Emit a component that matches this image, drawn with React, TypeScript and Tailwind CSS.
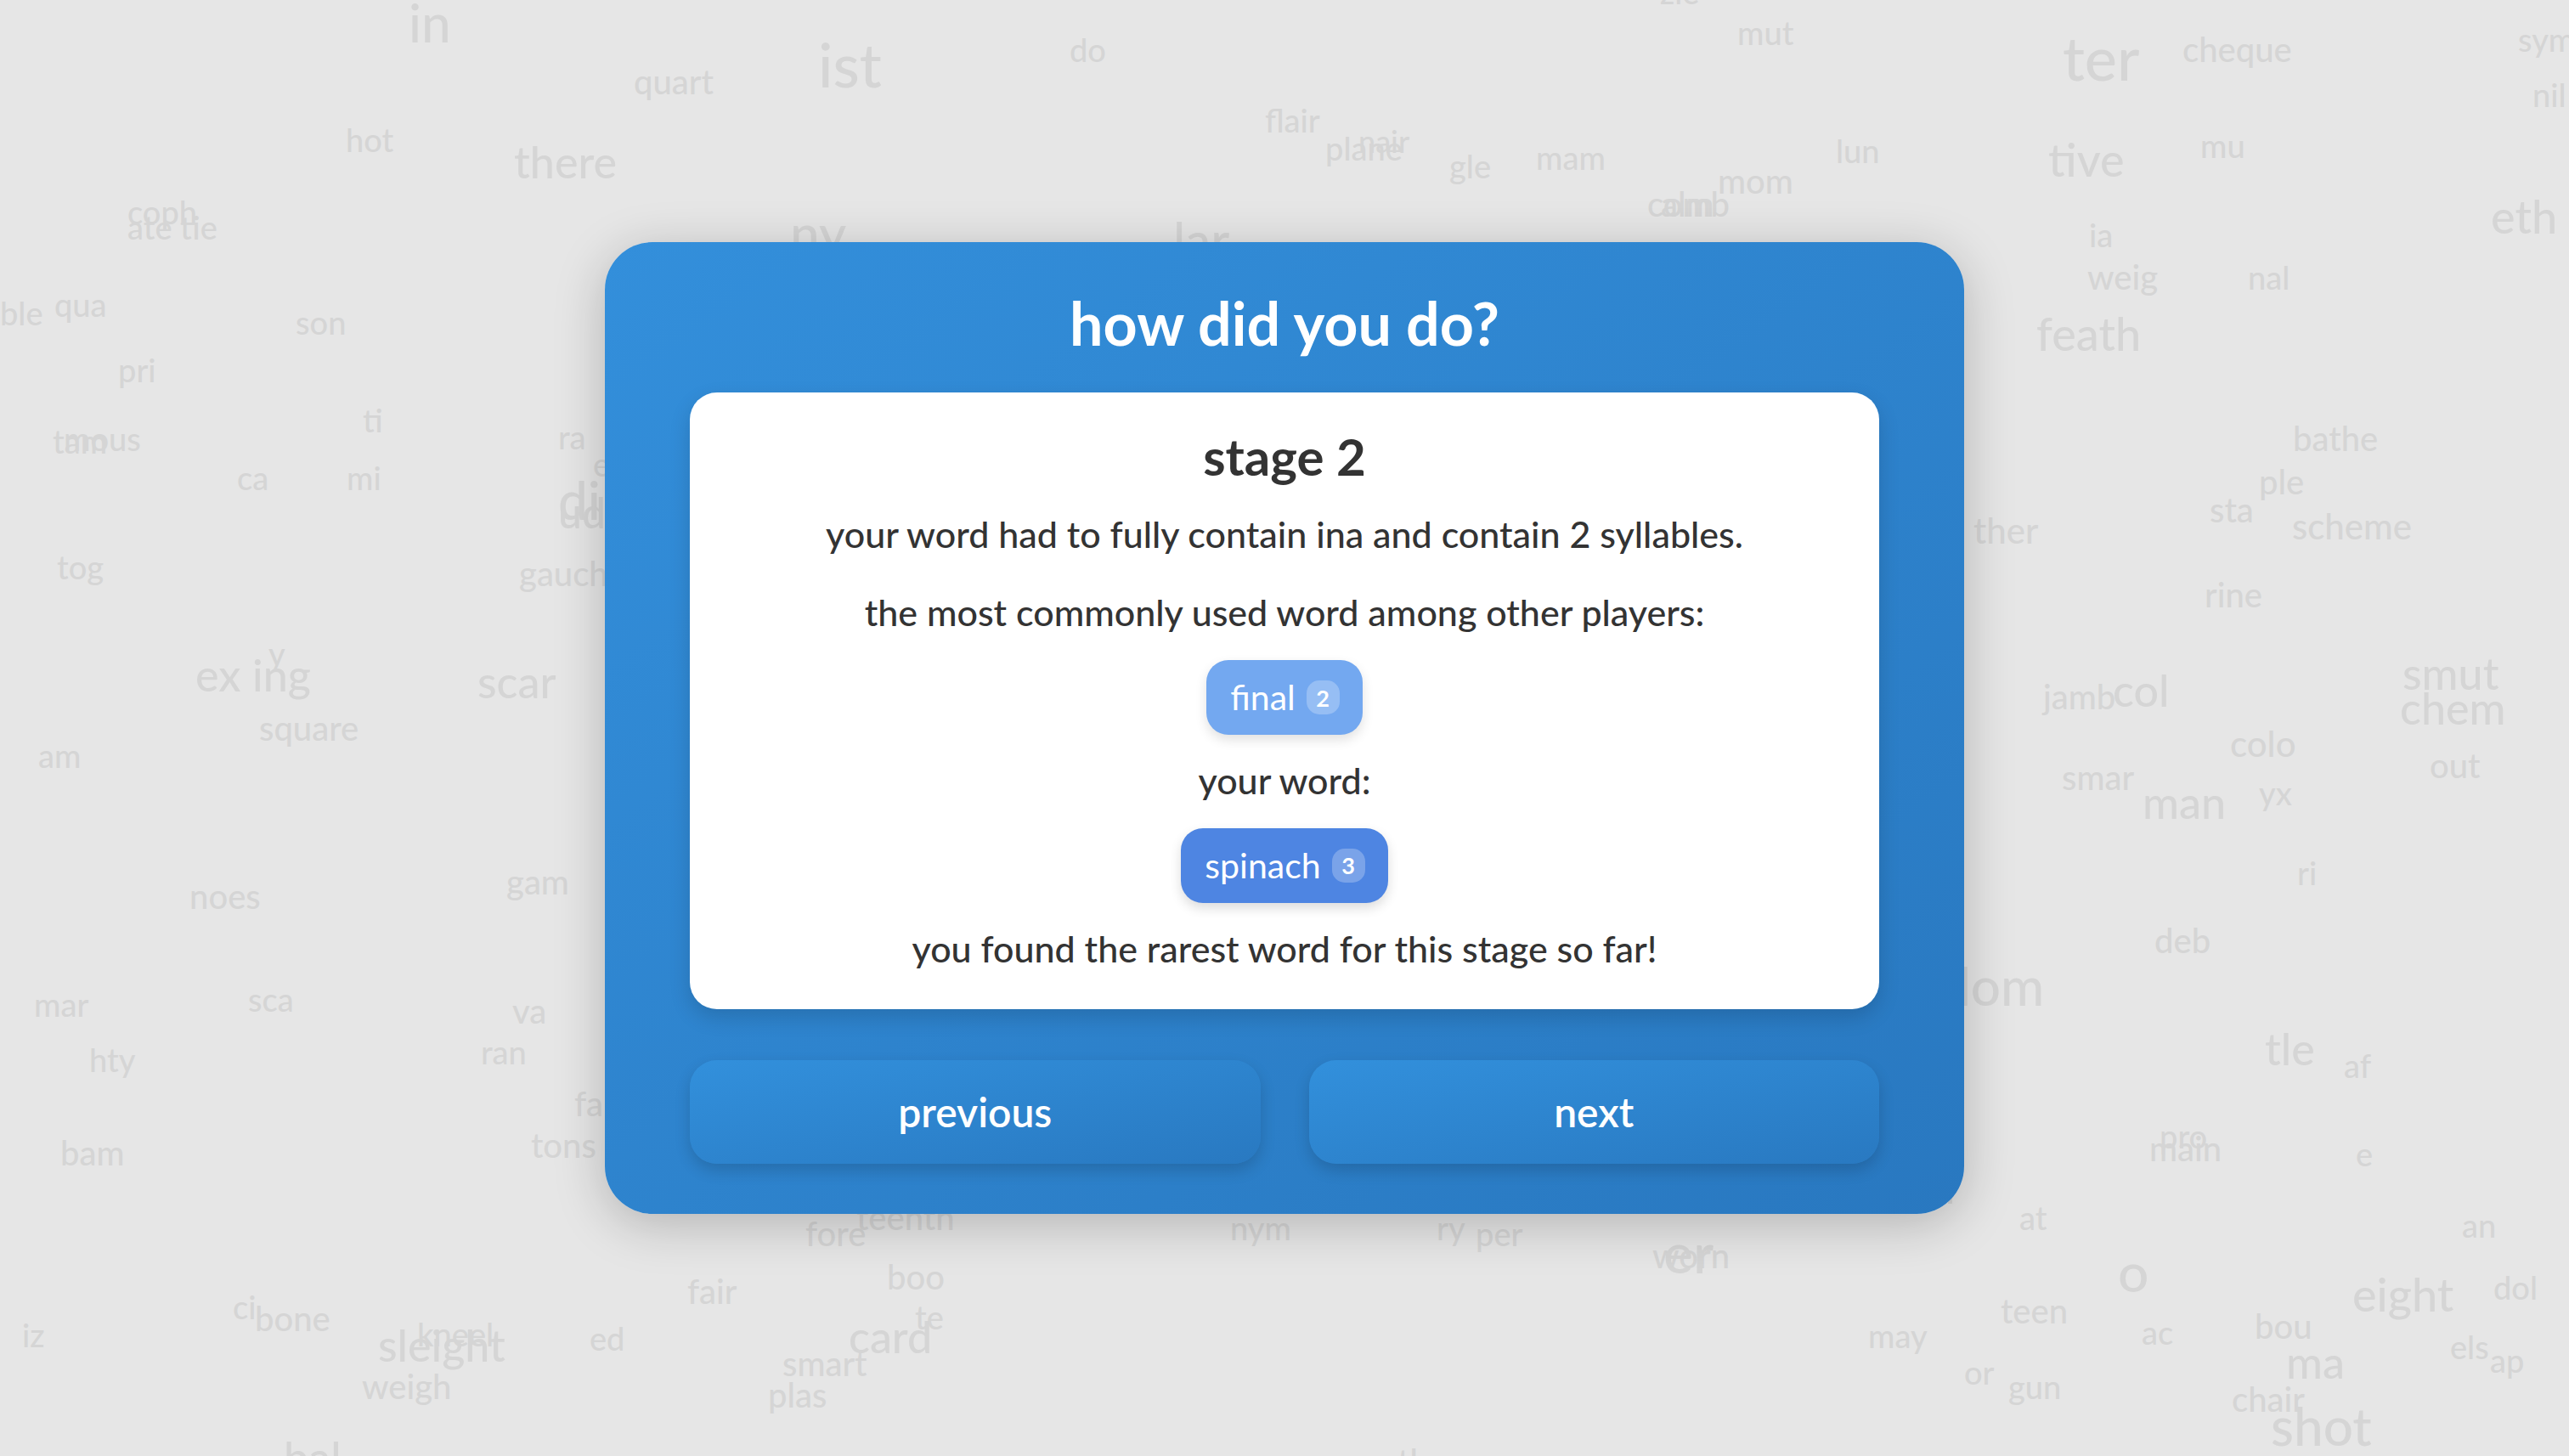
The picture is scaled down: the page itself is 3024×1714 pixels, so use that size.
import React from "react";

// background word cloud: [text, left, baseline, size]
const WORDS: [string, number, number, number][] = [
  ["in", 481, 50, 62], ["quart", 746, 111, 40], ["ist", 963, 103, 72], ["hot", 407, 179, 38],
  ["there", 605, 210, 52], ["coph", 150, 264, 38], ["ate tie", 150, 282, 38], ["ny", 930, 298, 62],
  ["ble", 0, 383, 38], ["qua", 64, 373, 38], ["son", 348, 394, 38], ["pri", 139, 450, 38],
  ["ti", 427, 509, 38], ["tam", 62, 534, 38], ["mous", 75, 531, 38], ["ra", 657, 529, 38],
  ["ca", 279, 577, 38], ["mi", 408, 577, 38], ["e", 698, 561, 38], ["di", 657, 612, 62],
  ["ud", 657, 622, 50], ["tog", 67, 682, 38], ["gauch", 611, 690, 40], ["y", 316, 784, 38],
  ["ex", 230, 814, 52], ["ing", 297, 814, 52], ["scar", 562, 822, 52], ["square", 305, 872, 40],
  ["am", 45, 904, 38], ["noes", 223, 1070, 40], ["gam", 596, 1053, 40], ["mar", 40, 1197, 38],
  ["sca", 292, 1191, 38], ["va", 603, 1205, 40], ["hty", 105, 1262, 38], ["ran", 566, 1253, 38],
  ["fa", 676, 1314, 40], ["tons", 625, 1363, 40], ["bam", 71, 1372, 40], ["fore", 948, 1467, 40],
  ["teenth", 1008, 1448, 40], ["fair", 809, 1535, 40], ["ci", 274, 1553, 38], ["bone", 300, 1567, 40],
  ["iz", 26, 1586, 38], ["sleight", 445, 1603, 52], ["kneel", 491, 1585, 38], ["ed", 694, 1590, 38],
  ["weigh", 426, 1647, 40], ["boo", 1044, 1518, 40], ["te", 1077, 1565, 38], ["card", 999, 1593, 52],
  ["smart", 921, 1620, 40], ["plas", 904, 1657, 40], ["bal", 334, 1735, 52], ["nym", 1448, 1460, 38],
  ["ry", 1691, 1460, 38], ["per", 1737, 1467, 38], ["worn", 1945, 1493, 40], ["er", 1958, 1500, 66],
  ["them", 1645, 1735, 40], ["do", 1259, 73, 38], ["zle", 1954, 5, 38], ["mut", 2045, 53, 38],
  ["flair", 1489, 156, 38], ["plane", 1560, 189, 38], ["nair", 1599, 180, 36], ["gle", 1706, 210, 38],
  ["mam", 1808, 200, 38], ["lun", 2161, 192, 38], ["mom", 2022, 228, 40], ["comb", 1939, 255, 40],
  ["alm", 1955, 255, 40], ["lar", 1381, 305, 60], ["ter", 2428, 95, 72], ["cheque", 2569, 73, 40],
  ["sym", 2964, 61, 38], ["nil", 2981, 126, 38], ["tive", 2411, 209, 54], ["mu", 2590, 186, 38],
  ["eth", 2932, 276, 54], ["ia", 2459, 291, 38], ["weig", 2457, 341, 40], ["nal", 2646, 341, 38],
  ["feath", 2397, 414, 54], ["bathe", 2699, 531, 40], ["ple", 2659, 582, 40], ["sta", 2601, 615, 40],
  ["scheme", 2698, 635, 42], ["ther", 2323, 640, 42], ["rine", 2595, 715, 40], ["jamb", 2405, 835, 40],
  ["col", 2487, 832, 52], ["smut", 2828, 812, 52], ["chem", 2825, 853, 52], ["colo", 2625, 891, 42],
  ["out", 2860, 916, 40], ["smar", 2427, 930, 40], ["man", 2522, 964, 52], ["yx", 2659, 948, 38],
  ["ri", 2704, 1042, 38], ["deb", 2536, 1122, 40], ["dom", 2285, 1184, 62], ["ion", 2230, 1417, 52],
  ["tle", 2666, 1254, 52], ["af", 2759, 1269, 38], ["pro", 2542, 1352, 38], ["main", 2530, 1367, 40],
  ["e", 2773, 1373, 38], ["at", 2377, 1448, 38], ["an", 2898, 1457, 38], ["o", 2493, 1522, 64],
  ["teen", 2355, 1558, 40], ["eight", 2769, 1545, 54], ["dol", 2935, 1530, 38], ["may", 2199, 1587, 38],
  ["ac", 2521, 1583, 38], ["bou", 2654, 1576, 40], ["els", 2884, 1600, 38], ["ap", 2931, 1616, 38],
  ["ma", 2691, 1623, 52], ["or", 2312, 1630, 38], ["gun", 2364, 1647, 38], ["chair", 2627, 1662, 40],
  ["shot", 2673, 1702, 62],
];

function WordChip({ word, count, tone }: { word: string; count: number; tone: "light" | "dark" }) {
  return (
    <div
      className={
        tone === "light"
          ? "inline-flex h-[88px] items-center rounded-[26px] bg-[#73a8f0] pl-[28px] pr-[27px] text-white shadow-[0_6px_14px_rgba(0,0,0,0.12)]"
          : "inline-flex h-[88px] items-center rounded-[26px] bg-[#4e85e2] pl-[28px] pr-[27px] text-white shadow-[0_6px_14px_rgba(0,0,0,0.14)]"
      }
    >
      <span className="text-[41px] leading-[1.2]">{word}</span>
      <span className="ml-[13px] flex h-[40px] min-w-[39px] items-center justify-center rounded-[15px] bg-white/25 text-[27px] font-bold leading-none">
        {count}
      </span>
    </div>
  );
}

export default function App() {
  return (
    <div className="relative h-[1714px] w-full overflow-hidden bg-[#e6e6e6] font-['Lato','Noto_Sans',sans-serif]">
      <div className="pointer-events-none absolute inset-0 select-none" aria-hidden>
        {WORDS.map(([t, x, b, s], i) => (
          <span
            key={i}
            className="absolute whitespace-nowrap font-medium leading-none text-[#d5d5d5]"
            style={{ left: x, top: b - 0.887 * s, fontSize: s }}
          >
            {t}
          </span>
        ))}
      </div>

      <div className="relative z-10 flex h-full items-center justify-center">
        <div className="w-[1600px] rounded-[56px] bg-linear-to-br from-[#338fdb] to-[#2978c0] px-[100px] pb-[59px] pt-[53px] shadow-[0_12px_60px_rgba(0,0,0,0.22)]">
          <h1 className="text-center text-[70px] font-bold leading-[1.2] text-white">how did you do?</h1>

          <div className="mt-[40px] flex flex-col items-center rounded-[32px] bg-white pb-[46px] pt-[39px] text-[#333333] shadow-[0_10px_24px_rgba(0,0,0,0.15)]">
            <h2 className="text-[60px] font-bold leading-[1.2]">stage 2</h2>
            <p className="mt-[30px] text-[43px] font-medium leading-[1.2]">
              your word had to fully contain ina and contain 2 syllables.
            </p>
            <p className="mt-[41px] text-[43px] font-medium leading-[1.2]">
              the most commonly used word among other players:
            </p>
            <div className="mt-[30px]">
              <WordChip word="final" count={2} tone="light" />
            </div>
            <p className="mt-[28px] text-[43px] font-medium leading-[1.2]">your word:</p>
            <div className="mt-[30px]">
              <WordChip word="spinach" count={3} tone="dark" />
            </div>
            <p className="mt-[28px] text-[43px] font-medium leading-[1.2]">
              you found the rarest word for this stage so far!
            </p>
          </div>

          <div className="mt-[60px] grid grid-cols-2 gap-[57px]">
            <button className="flex h-[122px] items-center justify-center rounded-[32px] bg-linear-to-br from-[#3290dc] to-[#2979c1] text-[48px] font-semibold text-white shadow-[0_8px_18px_rgba(0,0,0,0.16)]">
              previous
            </button>
            <button className="flex h-[122px] items-center justify-center rounded-[32px] bg-linear-to-br from-[#3290dc] to-[#2979c1] text-[48px] font-semibold text-white shadow-[0_8px_18px_rgba(0,0,0,0.16)]">
              next
            </button>
          </div>
        </div>
      </div>
    </div>
  );
}
